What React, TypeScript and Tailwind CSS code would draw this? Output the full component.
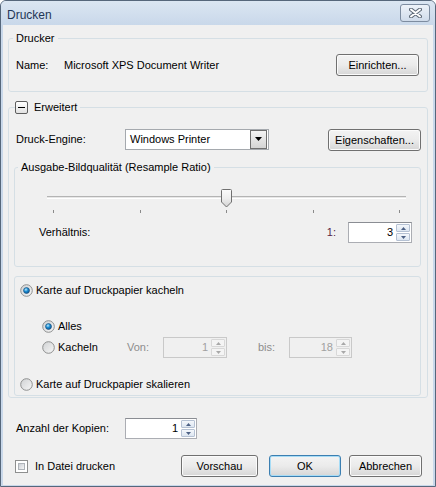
import type { ReactNode } from 'react';

const font = { fontFamily: '"Liberation Sans", Arial, sans-serif' };

function WinButton({ children, className = '', focused = false }: { children: ReactNode; className?: string; focused?: boolean }) {
  return (
    <button
      className={`h-[22px] rounded-[3px] border text-[11px] text-black bg-linear-to-b from-[#f3f3f3] via-[#ebebeb] to-[#d6d6d6] ${
        focused ? 'border-[#3c7fb1] shadow-[inset_0_0_0_1px_#a7dcf6]' : 'border-[#707070] shadow-[inset_0_0_0_1px_#fbfbfb]'
      } ${className}`}
    >
      {children}
    </button>
  );
}

function Arrow({ up, disabled }: { up?: boolean; disabled?: boolean }) {
  return (
    <svg width="5" height="3" viewBox="0 0 5 3">
      <path d={up ? 'M2.5 0 L5 3 L0 3 Z' : 'M0 0 L5 0 L2.5 3 Z'} fill={disabled ? '#a8a8a8' : '#4d6185'} />
    </svg>
  );
}

function Spin({ value, className, disabled = false }: { value: string; className: string; disabled?: boolean }) {
  return (
    <div
      className={`flex h-[21px] border ${
        disabled ? 'border-[#c9c9c9] bg-[#f0f0f0] text-[#a0a0a0]' : 'border-[#abadb3] border-t-[#8a8d93] bg-white text-black'
      } ${className}`}
    >
      <div className="flex-1 flex items-center justify-end pr-[3px] text-[11px]">{value}</div>
      <div className="w-[15px] flex flex-col py-[1px] pr-[1px] gap-[1px]">
        <div
          className={`flex-1 flex items-center justify-center rounded-[1px] border ${
            disabled ? 'border-[#d8d8d8] bg-[#f4f4f4]' : 'border-[#b5c1d3] bg-linear-to-b from-[#f4f7fb] to-[#dde6f1]'
          }`}
        >
          <Arrow up disabled={disabled} />
        </div>
        <div
          className={`flex-1 flex items-center justify-center rounded-[1px] border ${
            disabled ? 'border-[#d8d8d8] bg-[#f4f4f4]' : 'border-[#b5c1d3] bg-linear-to-b from-[#f4f7fb] to-[#dde6f1]'
          }`}
        >
          <Arrow disabled={disabled} />
        </div>
      </div>
    </div>
  );
}

function Radio({ checked }: { checked?: boolean }) {
  return (
    <svg width="13" height="13" viewBox="0 0 13 13" className="shrink-0">
      <defs>
        <linearGradient id="rb" x1="0" y1="0" x2="1" y2="1">
          <stop offset="0" stopColor="#cfd1d3" />
          <stop offset="1" stopColor="#f7f7f7" />
        </linearGradient>
        <radialGradient id="rd" cx="0.4" cy="0.35" r="0.7">
          <stop offset="0" stopColor="#bfe9fb" />
          <stop offset="0.45" stopColor="#1d8fd3" />
          <stop offset="1" stopColor="#0b4e8c" />
        </radialGradient>
      </defs>
      <circle cx="6.5" cy="6.5" r="5.8" fill="url(#rb)" stroke="#8e8f8f" strokeWidth="1" />
      {checked && <circle cx="6.5" cy="6.5" r="3" fill="url(#rd)" stroke="#1d4f7a" strokeWidth="0.6" />}
    </svg>
  );
}

function Checkbox() {
  return (
    <div className="w-[13px] h-[13px] border border-[#8e8f8f] bg-white p-[2px] shrink-0">
      <div className="w-full h-full bg-linear-to-br from-[#cbcfd5] to-[#f6f6f6] border border-[#aeb3b9]" />
    </div>
  );
}

export default function App() {
  return (
    <div style={font} className="w-[436px] h-[487px] bg-[#c9d8ea] border border-[#56677b] rounded-t-[6px] flex flex-col text-[11px] text-black overflow-hidden">
      {/* title bar */}
      <div className="h-[24px] flex items-start justify-between pl-[6px] pr-[5px] bg-linear-to-b from-[#dbe6f2] to-[#c9d8ea]">
        <span className="mt-[5px] text-[12px] text-[#1f3656]">Drucken</span>
        <div className="mt-[3px] w-[30px] h-[18px] rounded-[3px] border border-[#7d8ca0] bg-linear-to-b from-[#eef3f9] to-[#cfdbea] flex items-center justify-center">
          <svg width="13" height="10" viewBox="0 0 13 10">
            <path d="M2 1.5 L11 8.5 M11 1.5 L2 8.5" stroke="#5f6a78" strokeWidth="4" strokeLinecap="round" />
            <path d="M2 1.5 L11 8.5 M11 1.5 L2 8.5" stroke="#ffffff" strokeWidth="2" strokeLinecap="round" />
          </svg>
        </div>
      </div>

      {/* content */}
      <div className="flex-1 mx-[2px] mb-[1px] bg-[#f0f0f0] px-[5px] flex flex-col">
        <fieldset className="mt-[7px] border border-[#d5dfe5] rounded-[3px] pl-[7px] pr-[8px] pb-[15px]">
          <legend className="-ml-[3px] px-[3px] leading-[13px]">Drucker</legend>
          <div className="mt-[9px] flex items-center">
            <span className="w-[48px]">Name:</span>
            <span>Microsoft XPS Document Writer</span>
            <WinButton className="ml-auto w-[83px] h-[21px]">Einrichten...</WinButton>
          </div>
        </fieldset>

        <fieldset className="mt-[9px] border border-[#d5dfe5] rounded-[3px] pl-[5px] pr-[6px] pb-[1px]">
          <legend className="ml-[1px] pr-[3px] leading-[13px] flex items-center gap-[6px]">
            <span className="w-[13px] h-[13px] rounded-[2px] border border-[#5e5e5e] bg-linear-to-b from-[#ffffff] to-[#e2e2e2] flex items-center justify-center">
              <span className="w-[7px] h-[1px] bg-black" />
            </span>
            Erweitert
          </legend>

          <div className="mt-[13px] pl-[2px] flex items-center">
            <span className="w-[109px]">Druck-Engine:</span>
            <div className="w-[144px] h-[21px] border border-[#a5a9ae] bg-white flex items-center pl-[4px] pr-[1px]">
              <span className="flex-1">Windows Printer</span>
              <div className="w-[17px] h-[19px] border border-[#6f6f6f] bg-linear-to-b from-[#f4f4f4] to-[#d4d4d4] flex items-center justify-center">
                <svg width="7" height="4" viewBox="0 0 7 4">
                  <path d="M0 0 L7 0 L3.5 4 Z" fill="#000" />
                </svg>
              </div>
            </div>
            <WinButton className="ml-auto w-[93px] h-[21px] mt-[2px]">Eigenschaften...</WinButton>
          </div>

          <fieldset className="mt-[10px] border border-[#d5dfe5] rounded-[3px] pb-[23px]">
            <legend className="ml-[3px] px-[3px] leading-[13px]">Ausgabe-Bildqualität (Resample Ratio)</legend>
            <div className="mt-[15px] ml-[32px] w-[359px]">
              <div className="relative h-[19px]">
                <div className="absolute left-0 right-0 top-[7px] h-[3px] border-t border-[#b4b4b4] border-b border-b-white bg-[#e7e7e7]" />
                <svg width="11" height="19" viewBox="0 0 11 19" className="absolute left-[174px] top-0">
                  <defs>
                    <linearGradient id="th" x1="0" y1="0" x2="0" y2="1">
                      <stop offset="0" stopColor="#fbfbfb" />
                      <stop offset="0.5" stopColor="#eeeeee" />
                      <stop offset="1" stopColor="#d2d2d2" />
                    </linearGradient>
                  </defs>
                  <path d="M1.5 0.5 H9.5 A1 1 0 0 1 10.5 1.5 V13 L5.5 18 L0.5 13 V1.5 A1 1 0 0 1 1.5 0.5 Z" fill="url(#th)" stroke="#707070" />
                </svg>
              </div>
              <div className="mt-[2px] px-[6px] flex justify-between">
                <span className="w-[1px] h-[3px] bg-[#8a8a8a]" />
                <span className="w-[1px] h-[3px] bg-[#8a8a8a]" />
                <span className="w-[1px] h-[3px] bg-[#8a8a8a]" />
                <span className="w-[1px] h-[3px] bg-[#8a8a8a]" />
                <span className="w-[1px] h-[3px] bg-[#8a8a8a]" />
              </div>
            </div>
            <div className="mt-[9px] pl-[24px] pr-[8px] flex items-center">
              <span>Verhältnis:</span>
              <span className="ml-auto mr-[12px] text-[#5a1e46]">1:</span>
              <Spin value="3" className="w-[64px]" />
            </div>
          </fieldset>

          <div className="mt-[9px] border border-[#d5dfe5] rounded-[3px] pl-[5px] pt-[5px] pb-[2px]">
            <div className="h-[17px] flex items-center gap-[3px]">
              <Radio checked />
              <span>Karte auf Druckpapier kacheln</span>
            </div>
            <div className="mt-[19px] pl-[22px] h-[17px] flex items-center gap-[3px]">
              <Radio checked />
              <span>Alles</span>
            </div>
            <div className="mt-[2px] pl-[22px] h-[21px] flex items-center">
              <div className="w-[85px] flex items-center gap-[3px]">
                <Radio />
                <span>Kacheln</span>
              </div>
              <span className="w-[36px] text-[#8d8d8d]">Von:</span>
              <Spin value="1" className="w-[64px]" disabled />
              <span className="ml-[31px] w-[31px] text-[#8d8d8d]">bis:</span>
              <Spin value="18" className="w-[63px]" disabled />
            </div>
            <div className="mt-[18px] h-[17px] flex items-center gap-[3px]">
              <Radio />
              <span>Karte auf Druckpapier skalieren</span>
            </div>
          </div>
        </fieldset>

        <div className="mt-[20px] pl-[8px] flex items-center">
          <span className="w-[109px]">Anzahl der Kopien:</span>
          <Spin value="1" className="w-[72px]" />
        </div>

        <div className="mt-[16px] pl-[7px] pr-[6px] flex items-center">
          <Checkbox />
          <span className="ml-[7px]">In Datei drucken</span>
          <WinButton className="ml-auto w-[77px]">Vorschau</WinButton>
          <WinButton className="ml-[11px] w-[72px]" focused>
            OK
          </WinButton>
          <WinButton className="ml-[8px] w-[73px]">Abbrechen</WinButton>
        </div>
      </div>
    </div>
  );
}
